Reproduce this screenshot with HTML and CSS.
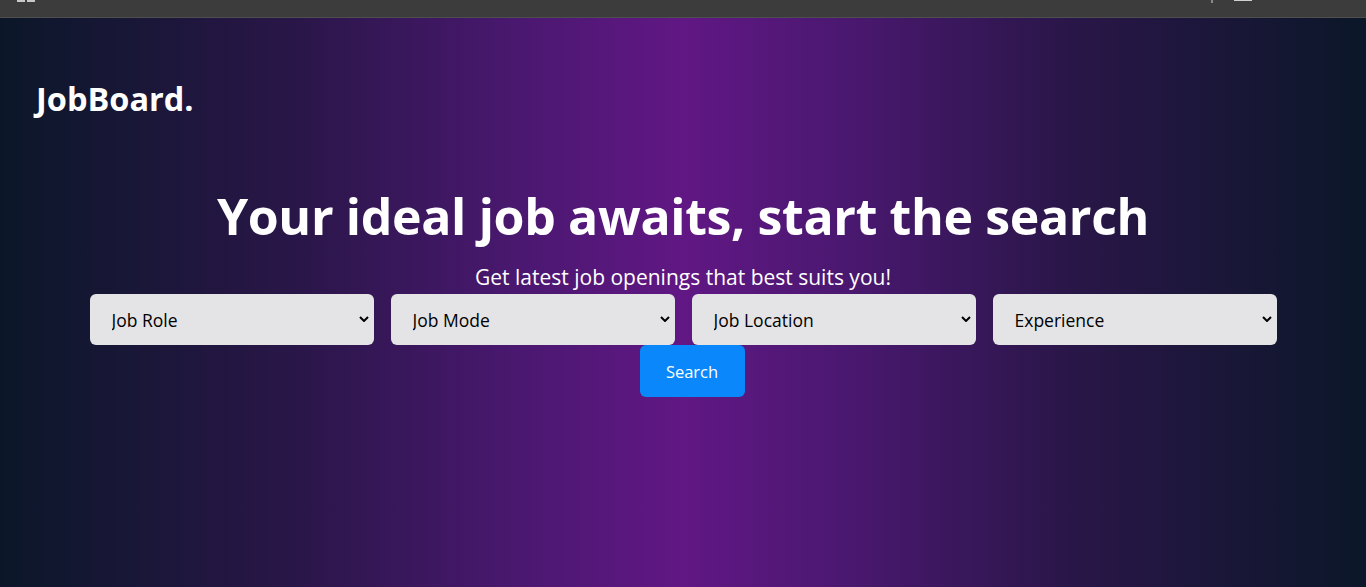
FILE: index.html
```html
<!DOCTYPE html>
<html>
<head>
<meta charset="utf-8">
<link rel="stylesheet" href="styles.css">
</head>
<body>
<div class="chrome">
  <span class="c-ico c-left"><i></i><i></i></span>
  <span class="c-right"><span class="c-mark"></span><span class="c-box"></span></span>
</div>
<main class="page">
  <header class="logo">JobBoard.</header>
  <section class="hero">
    <h1>Your ideal job awaits, start the search</h1>
    <p class="sub">Get latest job openings that best suits you!</p>
    <div class="filters">
      <div class="sel"><select><option>Job Role</option></select><svg viewBox="0 0 10 6"><path d="M1 1l4 4 4-4" fill="none" stroke="#000" stroke-width="2"/></svg></div>
      <div class="sel"><select><option>Job Mode</option></select><svg viewBox="0 0 10 6"><path d="M1 1l4 4 4-4" fill="none" stroke="#000" stroke-width="2"/></svg></div>
      <div class="sel"><select><option>Job Location</option></select><svg viewBox="0 0 10 6"><path d="M1 1l4 4 4-4" fill="none" stroke="#000" stroke-width="2"/></svg></div>
      <div class="sel"><select><option>Experience</option></select><svg viewBox="0 0 10 6"><path d="M1 1l4 4 4-4" fill="none" stroke="#000" stroke-width="2"/></svg></div>
    </div>
    <button class="search">Search</button>
  </section>
</main>
</body>
</html>
```
FILE: styles.css
```css
html, body {
  margin: 0;
  padding: 0;
  height: 100%;
}
body {
  font-family: "Open Sans", "Noto Sans", sans-serif;
  background: #3c3c3c;
  display: flex;
  flex-direction: column;
  overflow: hidden;
}
.chrome {
  height: 17px;
  flex: none;
  background: #3c3c3c;
  border-bottom: 1px solid #4e4e4e;
  display: flex;
  justify-content: space-between;
  position: relative;
}
.c-ico {
  display: flex;
  gap: 2px;
  margin-left: 17px;
}
.c-ico i {
  display: block;
  width: 8px;
  height: 2px;
  background: #c8c8c8;
}
.c-right {
  display: flex;
  align-items: flex-start;
  margin-right: 114px;
  gap: 21px;
}
.c-mark {
  width: 2px;
  height: 3px;
  background: #8a8a8a;
}
.c-box {
  width: 18px;
  height: 1px;
  background: #d0d0d0;
}
.page {
  flex: 1;
  background: linear-gradient(to right, #0b1729 0%, #2a1649 22%, #4a1870 38%, #611784 50%, #4a1870 62%, #2a1649 78%, #0b1729 100%);
  color: #fff;
}
.logo {
  font-weight: 700;
  font-size: 32.5px;
  line-height: 40px;
  margin: 61px 0 0 36px;
}
.hero {
  display: flex;
  flex-direction: column;
  align-items: center;
  margin-top: 62px;
}
h1 {
  margin: 0;
  font-size: 50px;
  line-height: 70px;
  font-weight: 700;
  letter-spacing: -0.35px;
}
.sub {
  margin: 11px 0 0;
  font-size: 21px;
  line-height: 30px;
}
.filters {
  display: flex;
  gap: 17px;
  margin-top: 2px;
}
.sel {
  position: relative;
  width: 284px;
  height: 51px;
}
.sel select {
  appearance: none;
  -webkit-appearance: none;
  width: 100%;
  height: 100%;
  border: none;
  border-radius: 6px;
  background: #e4e4e6;
  color: #000;
  font-family: "Open Sans", "Noto Sans", sans-serif;
  font-size: 17.5px;
  padding: 0 0 0 22px;
  outline: none;
}
.sel svg {
  position: absolute;
  right: 5px;
  top: 22px;
  width: 10px;
  height: 6px;
  pointer-events: none;
}
.search {
  width: 105px;
  height: 52px;
  margin-left: 18px;
  border: none;
  border-radius: 6px;
  background: #0a88fb;
  color: #fff;
  font-family: "Open Sans", "Noto Sans", sans-serif;
  font-size: 16.5px;
}
```
